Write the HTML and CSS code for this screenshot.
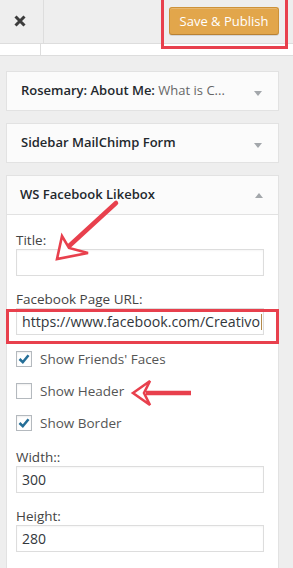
FILE: index.html
```html
<!DOCTYPE html>
<html>
<head>
<meta charset="utf-8">
<link rel="stylesheet" href="styles.css">
</head>
<body>
<div class="topbar">
  <div class="close">
    <svg width="12" height="12" viewBox="0 0 12 12"><path d="M1.5 1.5 L10.5 10.5 M10.5 1.5 L1.5 10.5" stroke="#3c3c3c" stroke-width="3" stroke-linecap="butt"/></svg>
  </div>
  <div class="top-fill"></div>
  <button class="publish">Save &amp; Publish</button>
</div>
<div class="strip"><div class="strip-left"></div></div>

<div class="sections">
  <div class="section">
    <h3 class="sec-title">Rosemary: About Me: <span class="sub">What is C...</span></h3>
    <span class="caret down"></span>
  </div>
  <div class="section">
    <h3 class="sec-title">Sidebar MailChimp Form</h3>
    <span class="caret down"></span>
  </div>
  <div class="widget">
    <div class="section widget-top">
      <h3 class="sec-title">WS Facebook Likebox</h3>
      <span class="caret up"></span>
    </div>
    <div class="widget-inside">
      <label class="lbl first">Title:</label>
      <div class="field"></div>
      <label class="lbl">Facebook Page URL:</label>
      <div class="field url">https://www.facebook.com/Creativo<span class="text-caret"></span></div>
      <div class="checks">
        <div class="check-row"><span class="cb"><svg width="14" height="14" viewBox="0 0 14 14"><path d="M2.5 7 L5.8 10.2 L11.5 3.2" fill="none" stroke="#256f98" stroke-width="2.6"/></svg></span><span class="cb-text">Show Friends' Faces</span></div>
        <div class="check-row"><span class="cb"></span><span class="cb-text">Show Header</span></div>
        <div class="check-row"><span class="cb"><svg width="14" height="14" viewBox="0 0 14 14"><path d="M2.5 7 L5.8 10.2 L11.5 3.2" fill="none" stroke="#256f98" stroke-width="2.6"/></svg></span><span class="cb-text">Show Border</span></div>
      </div>
      <label class="lbl after-checks">Width::</label>
      <div class="field">300</div>
      <label class="lbl">Height:</label>
      <div class="field">280</div>
    </div>
  </div>
</div>

<div class="hl hl-publish"></div>
<div class="hl hl-url"></div>
<svg class="arrows" width="293" height="568" viewBox="0 0 293 568">
  <line x1="116" y1="203" x2="68" y2="247" stroke="#e8404d" stroke-width="4.5" stroke-linecap="round"/>
  <path d="M57 259 L62 236 L69 248 L88 253 Z" fill="#fff" stroke="#e8404d" stroke-width="2.6" stroke-linejoin="miter"/>
  <line x1="146" y1="393" x2="191" y2="393" stroke="#e8404d" stroke-width="4.5"/>
  <path d="M133 393 L150 381 L144 393 L150 405 Z" fill="#fff" stroke="#e8404d" stroke-width="2.6"/>
</svg>
</body>
</html>
```

FILE: styles.css
```css
* { box-sizing: border-box; }
html, body { margin: 0; padding: 0; }
body {
  position: relative;
  width: 293px;
  height: 568px;
  overflow: hidden;
  background: #eeeeee;
  font-family: "Open Sans", "Noto Sans", sans-serif;
  color: #444;
}
.topbar {
  display: flex;
  align-items: center;
  height: 44px;
  border-bottom: 1px solid #dddddd;
  background: #eeeeee;
  padding-right: 14px;
}
.close {
  width: 44px;
  height: 43px;
  border-right: 1px solid #dddddd;
  display: flex;
  align-items: center;
  justify-content: center;
  padding-right: 3px;
  padding-bottom: 1px;
}
.top-fill { flex: 1; }
.publish {
  height: 28px;
  width: 110px;
  margin-top: -1px;
  padding: 0;
  border: 1px solid #cd9239;
  border-bottom-color: #b98133;
  border-radius: 3px;
  background: #e2a64b;
  color: #fff;
  font-family: "Open Sans", sans-serif;
  font-size: 13px;
  line-height: 26px;
  box-shadow: inset 0 1px 0 rgba(255,255,255,0.2), 0 1px 0 rgba(0,0,0,0.1);
}
.strip {
  height: 12px;
  background: #fff;
  border-bottom: 1px solid #dddddd;
}
.strip-left {
  width: 41px;
  height: 11px;
  border-right: 1px solid #dddddd;
}
.sections {
  padding: 15px 14px 0 6px;
}
.section {
  position: relative;
  height: 40px;
  border: 1px solid #e2e2e2;
  background: #fbfbfb;
  margin-bottom: 12px;
  display: flex;
  align-items: center;
  padding-left: 14px;
}
.sec-title {
  margin: 0;
  font-size: 13px;
  font-weight: 600;
  color: #23282d;
  white-space: nowrap;
  padding-bottom: 2px;
}
.sec-title .sub {
  font-weight: 400;
  color: #666;
}
.caret {
  position: absolute;
  right: 16px;
  top: 19px;
  width: 0;
  height: 0;
  border-left: 4px solid transparent;
  border-right: 4px solid transparent;
}
.caret.down { border-top: 5px solid #a3a7ab; }
.caret.up { border-bottom: 5px solid #a3a7ab; top: 17px; }
.widget {
  border: 1px solid #e2e2e2;
  background: #fff;
}
.widget-top {
  border: none;
  border-bottom: 1px solid #e2e2e2;
  margin: 0;
  height: 39px;
  padding-left: 13px;
}
.widget-top .caret { right: 15px; }
.widget-inside {
  padding: 16px 14px 20px 9px;
}
.lbl {
  display: block;
  font-size: 13.5px;
  line-height: 18px;
  color: #444;
  margin-top: 14px;
}
.lbl.first { margin-top: 0; }
.lbl.after-checks { margin-top: 9px; }
.field {
  position: relative;
  height: 27px;
  border: 1px solid #dddddd;
  box-shadow: inset 0 1px 2px rgba(0,0,0,0.04);
  background: #fff;
  font-size: 14px;
  line-height: 25px;
  color: #32373c;
  padding: 0 5px 0 5px;
  white-space: nowrap;
  overflow: hidden;
}
.field.url { font-size: 14.2px; }
.text-caret {
  display: inline-block;
  width: 1px;
  height: 16px;
  background: #b48a4a;
  vertical-align: -3px;
  margin-left: 1px;
}
.checks {
  padding-top: 8px;
}
.check-row {
  display: flex;
  align-items: center;
  height: 32px;
}
.cb {
  width: 16px;
  height: 16px;
  border: 1px solid #b4b9be;
  background: #fff;
  box-shadow: inset 0 1px 2px rgba(0,0,0,0.07);
  display: flex;
  align-items: center;
  justify-content: center;
  margin-right: 8px;
}
.cb-text {
  font-size: 13.5px;
  color: #555;
  line-height: 18px;
}
.hl {
  position: absolute;
  border: 3px solid #e8404d;
}
.hl-publish {
  left: 161px;
  top: -4px;
  width: 127px;
  height: 53px;
}
.hl-url {
  left: 6px;
  top: 309px;
  width: 273px;
  height: 35px;
}
.arrows {
  position: absolute;
  left: 0;
  top: 0;
  pointer-events: none;
}
```
